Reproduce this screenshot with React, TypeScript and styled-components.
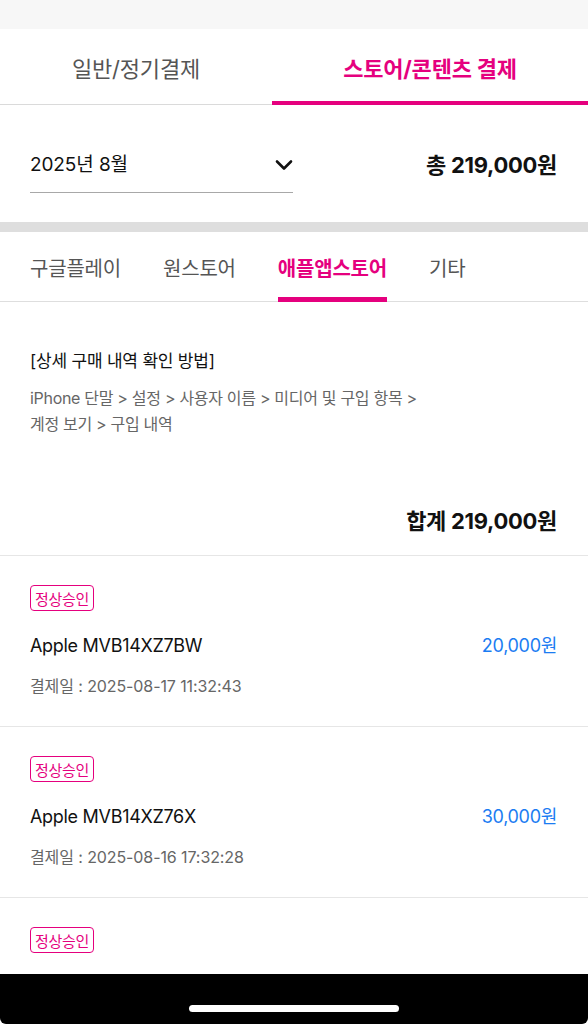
import styled, { createGlobalStyle } from "styled-components"

const PINK = "#e5007e"

const GlobalStyle = createGlobalStyle`
    html, body {
        margin: 0;
        padding: 0;
        background: #ffffff;
    }
    body {
        font-family: "Inter", "Noto Sans CJK KR", sans-serif;
        color: #111;
        -webkit-font-smoothing: antialiased;
    }
`

type Payment = {
    name: string,
    price: string,
    date: string
}

const payments: Payment[] = [
    { name: "Apple MVB14XZ7BW", price: "20,000원", date: "2025-08-17 11:32:43" },
    { name: "Apple MVB14XZ76X", price: "30,000원", date: "2025-08-16 17:32:28" },
    { name: "Apple MVB14XZ71K", price: "15,000원", date: "2025-08-15 09:12:05" },
]

const storeTabs = ["구글플레이", "원스토어", "애플앱스토어", "기타"]

function Chevron() {
    return (
        <svg width="18" height="12" viewBox="0 0 18 12" fill="none">
            <path d="M2 2.5 L9 9.5 L16 2.5" stroke="#111" strokeWidth="2.6" strokeLinecap="round" strokeLinejoin="round"/>
        </svg>
    )
}

function PaymentItem({ payment }: Readonly<{ payment: Payment }>) {
    return (
        <ItemRow>
            <Badge>정상승인</Badge>
            <ItemLine>
                <ItemName>{payment.name}</ItemName>
                <ItemPrice>{payment.price}</ItemPrice>
            </ItemLine>
            <ItemDate>결제일 : {payment.date}</ItemDate>
        </ItemRow>
    )
}

export default function App() {
    return (
        <Screen>
            <GlobalStyle/>
            <Content>
                <StatusStrip/>
                <MainTabs>
                    <MainTab>일반/정기결제</MainTab>
                    <MainTab $active>스토어/콘텐츠 결제</MainTab>
                </MainTabs>
                <DateRow>
                    <MonthSelect>
                        <span>2025년 8월</span>
                        <Chevron/>
                    </MonthSelect>
                    <Total>총 219,000원</Total>
                </DateRow>
                <Band/>
                <StoreTabs>
                    {storeTabs.map(tab => (
                        <StoreTab key={tab} $active={tab === "애플앱스토어"}>{tab}</StoreTab>
                    ))}
                </StoreTabs>
                <Info>
                    <InfoTitle>[상세 구매 내역 확인 방법]</InfoTitle>
                    <InfoText>
                        iPhone 단말 &gt; 설정 &gt; 사용자 이름 &gt; 미디어 및 구입 항목 &gt;<br/>
                        계정 보기 &gt; 구입 내역
                    </InfoText>
                    <Sum>합계 219,000원</Sum>
                </Info>
                {payments.map(p => <PaymentItem key={p.name} payment={p}/>)}
            </Content>
            <HomeBar>
                <HomeIndicator/>
            </HomeBar>
        </Screen>
    )
}

const Screen = styled.div`
    width: 588px;
    height: 1024px;
    display: flex;
    flex-direction: column;
    overflow: hidden;
    background: #fff;
`

const Content = styled.div`
    flex: 1;
    overflow: hidden;
    display: flex;
    flex-direction: column;
`

const StatusStrip = styled.div`
    height: 29px;
    flex-shrink: 0;
    background: #f7f7f7;
`

const MainTabs = styled.div`
    display: grid;
    grid-template-columns: 272px 1fr;
    height: 76px;
    flex-shrink: 0;
    box-shadow: inset 0 -1px 0 #dadada;
`

const MainTab = styled.div<{ $active?: boolean }>`
    display: flex;
    align-items: center;
    justify-content: center;
    font-size: 22px;
    letter-spacing: -0.2px;
    font-weight: ${({ $active }) => $active ? 700 : 400};
    color: ${({ $active }) => $active ? PINK : "#555"};
    box-shadow: ${({ $active }) => $active ? `inset 0 -4px 0 ${PINK}` : "none"};
`

const DateRow = styled.div`
    display: flex;
    justify-content: space-between;
    align-items: flex-start;
    padding: 48px 31px 29px 30px;
    flex-shrink: 0;
`

const MonthSelect = styled.div`
    width: 263px;
    display: flex;
    justify-content: space-between;
    align-items: center;
    padding-bottom: 15px;
    border-bottom: 1px solid #a8a8a8;
    font-size: 19px;
    line-height: 24px;
    letter-spacing: -0.1px;
    color: #111;
`

const Total = styled.div`
    font-size: 22px;
    line-height: 24px;
    font-weight: 700;
    letter-spacing: -0.3px;
    color: #111;
`

const Band = styled.div`
    height: 10px;
    flex-shrink: 0;
    background: #dedede;
`

const StoreTabs = styled.div`
    display: flex;
    gap: 42px;
    height: 70px;
    padding: 0 30px;
    flex-shrink: 0;
    box-shadow: inset 0 -1px 0 #dedede;
`

const StoreTab = styled.div<{ $active?: boolean }>`
    display: flex;
    align-items: center;
    font-size: 20px;
    letter-spacing: -0.2px;
    font-weight: ${({ $active }) => $active ? 700 : 400};
    color: ${({ $active }) => $active ? PINK : "#555"};
    box-shadow: ${({ $active }) => $active ? `inset 0 -5px 0 ${PINK}` : "none"};
`

const Info = styled.div`
    display: flex;
    flex-direction: column;
    padding: 47px 31px 20px 30px;
    border-bottom: 1px solid #e6e6e6;
    flex-shrink: 0;
`

const InfoTitle = styled.div`
    font-size: 17px;
    line-height: 24px;
    letter-spacing: -0.2px;
    color: #111;
`

const InfoText = styled.div`
    margin-top: 12px;
    font-size: 16px;
    line-height: 26px;
    letter-spacing: -0.3px;
    color: #666;
`

const Sum = styled.div`
    margin-top: 70px;
    align-self: flex-end;
    font-size: 22px;
    line-height: 28px;
    font-weight: 700;
    letter-spacing: -0.3px;
    color: #111;
`

const ItemRow = styled.div`
    display: flex;
    flex-direction: column;
    align-items: flex-start;
    padding: 29px 31px 29px 30px;
    border-bottom: 1px solid #e6e6e6;
    flex-shrink: 0;
`

const Badge = styled.span`
    box-sizing: border-box;
    height: 26px;
    padding: 0 4px;
    display: inline-flex;
    align-items: center;
    border: 1.5px solid ${PINK};
    border-radius: 4px;
    font-size: 15px;
    letter-spacing: -0.3px;
    color: ${PINK};
`

const ItemLine = styled.div`
    align-self: stretch;
    display: flex;
    justify-content: space-between;
    margin-top: 23px;
    font-size: 18px;
    line-height: 24px;
    letter-spacing: -0.3px;
`

const ItemName = styled.span`
    color: #111;
`

const ItemPrice = styled.span`
    color: #1b7cf2;
`

const ItemDate = styled.div`
    margin-top: 17px;
    font-size: 16px;
    line-height: 22px;
    letter-spacing: -0.1px;
    color: #666;
`

const HomeBar = styled.div`
    height: 50px;
    flex-shrink: 0;
    background: #000;
    border-radius: 0 0 6px 6px;
    display: flex;
    justify-content: center;
    padding-top: 31px;
    box-sizing: border-box;
`

const HomeIndicator = styled.div`
    width: 210px;
    height: 7px;
    border-radius: 4px;
    background: #fff;
`
